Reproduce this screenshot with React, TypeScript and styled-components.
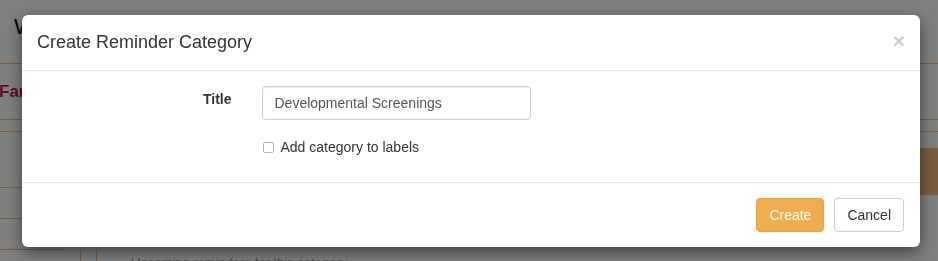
import React from "react";
import styled, { createGlobalStyle } from "styled-components";

const GlobalStyle = createGlobalStyle`
  html, body { margin: 0; padding: 0; }
  body {
    background: #ffffff;
    font-family: "Liberation Sans", Arial, sans-serif;
    font-size: 14px;
    color: #333;
    overflow: hidden;
  }
  * { box-sizing: border-box; }
`;

/* ---------- page under the backdrop ---------- */
const Page = styled.div`
  width: 938px;
  height: 261px;
  overflow: hidden;
`;

const PageHeading = styled.div`
  height: 64px;
  padding: 14px 0 0 14px;
  font-size: 22px;
  color: #000;
  border-bottom: 1px solid #fab478;
`;

const NavRow = styled.div`
  height: 56px;
  display: flex;
  align-items: center;
  font-size: 17px;
  font-weight: bold;
  color: #d0105e;
  border-bottom: 1px solid #fab478;
  margin-left: -1px;
`;

const Divider = styled.div`
  height: 12px;
  border-bottom: 1px solid #fab478;
`;

const ContentGrid = styled.div`
  display: grid;
  grid-template-columns: 97px 1fr;
  margin-top: 16px;
`;

const Sidebar = styled.div`
  display: flex;
  flex-direction: column;
`;

const SideRow = styled.div<{ $h: number; $w?: number }>`
  height: ${(p) => p.$h}px;
  width: ${(p) => (p.$w ? `${p.$w}px` : "100%")};
  border-bottom: 1px solid #fab478;
`;

const TableCols = styled.div`
  display: flex;
  height: 20px;
  padding-left: 80px;
`;

const TableCol = styled.div`
  width: 17px;
  border-left: 1px solid #fab478;
  border-right: 1px solid #fab478;
`;

const Main = styled.div`
  display: flex;
  flex-direction: column;
`;

const Band = styled.div`
  height: 47px;
  background: #f4b880;
`;

const MutedText = styled.div`
  margin: 60px 0 0 34px;
  font-size: 13px;
  color: #999;
`;

/* ---------- modal ---------- */
const Backdrop = styled.div`
  position: fixed;
  inset: 0;
  background: rgba(0, 0, 0, 0.5);
  padding: 15px 0 0 22px;
`;

const Dialog = styled.div`
  width: 898px;
  background: #fff;
  border-radius: 6px;
  box-shadow: 0 5px 15px rgba(0, 0, 0, 0.5);
`;

const Header = styled.div`
  display: flex;
  align-items: center;
  justify-content: space-between;
  height: 56px;
  padding: 0 15px;
  border-bottom: 1px solid #e5e5e5;
`;

const Title = styled.h4`
  margin: 0;
  font-size: 18px;
  font-weight: 500;
  color: #333;
  line-height: 1.42857;
`;

const Close = styled.button`
  background: none;
  border: 0;
  padding: 0;
  margin-top: -5px;
  font-family: "Liberation Sans", Arial, sans-serif;
  font-size: 21px;
  font-weight: bold;
  line-height: 1;
  color: #000;
  opacity: 0.2;
  cursor: pointer;
`;

const Body = styled.div`
  padding: 15px;
  height: 111px;
`;

const FormRow = styled.div`
  display: grid;
  grid-template-columns: 224.5px 299.3px;
  margin: 0 -15px;
`;

const Label = styled.label`
  padding: 3px 15px 0;
  text-align: right;
  font-weight: bold;
  font-size: 14px;
  color: #333;
  line-height: 20px;
`;

const Field = styled.div`
  padding: 0 15px;
`;

const Input = styled.input`
  display: block;
  width: 100%;
  height: 34px;
  padding: 6px 12px;
  font-family: "Liberation Sans", Arial, sans-serif;
  font-size: 14px;
  color: #555;
  background: #fff;
  border: 1px solid #ccc;
  border-radius: 4px;
  box-shadow: inset 0 1px 1px rgba(0, 0, 0, 0.075);
  outline: none;
`;

const CheckRow = styled.label`
  display: flex;
  align-items: center;
  gap: 7px;
  margin-top: 17px;
  padding-left: 1px;
  font-size: 14px;
  color: #333;
  line-height: 20px;
`;

const Box = styled.span`
  display: inline-block;
  width: 11px;
  height: 11px;
  border: 1px solid #b5b5b5;
  border-radius: 2px;
  background: #fff;
`;

const Footer = styled.div`
  display: flex;
  justify-content: flex-end;
  gap: 10px;
  padding: 15px 16px 15px 15px;
  border-top: 1px solid #e5e5e5;
`;

const Button = styled.button<{ $primary?: boolean }>`
  height: 34px;
  padding: 6px 12px;
  font-family: "Liberation Sans", Arial, sans-serif;
  font-size: 14px;
  line-height: 20px;
  border-radius: 4px;
  border: 1px solid ${(p) => (p.$primary ? "#eea236" : "#ccc")};
  background: ${(p) => (p.$primary ? "#f0ad4e" : "#fff")};
  color: ${(p) => (p.$primary ? "#fff" : "#333")};
  cursor: pointer;
`;

export default function App() {
  return (
    <>
      <GlobalStyle />
      <Page>
        <PageHeading>Well Child Visits</PageHeading>
        <NavRow>Family Health</NavRow>
        <Divider />
        <ContentGrid>
          <Sidebar>
            <SideRow $h={40} $w={22} />
            <SideRow $h={31} $w={22} />
            <SideRow $h={31} $w={64} />
            <TableCols>
              <TableCol />
            </TableCols>
          </Sidebar>
          <Main>
            <Band />
            <MutedText>Upcoming reminders for this category</MutedText>
          </Main>
        </ContentGrid>
      </Page>
      <Backdrop>
        <Dialog role="dialog">
          <Header>
            <Title>Create Reminder Category</Title>
            <Close aria-label="Close">×</Close>
          </Header>
          <Body>
            <FormRow>
              <Label>Title</Label>
              <Field>
                <Input defaultValue="Developmental Screenings" />
                <CheckRow>
                  <Box />
                  Add category to labels
                </CheckRow>
              </Field>
            </FormRow>
          </Body>
          <Footer>
            <Button $primary>Create</Button>
            <Button>Cancel</Button>
          </Footer>
        </Dialog>
      </Backdrop>
    </>
  );
}
